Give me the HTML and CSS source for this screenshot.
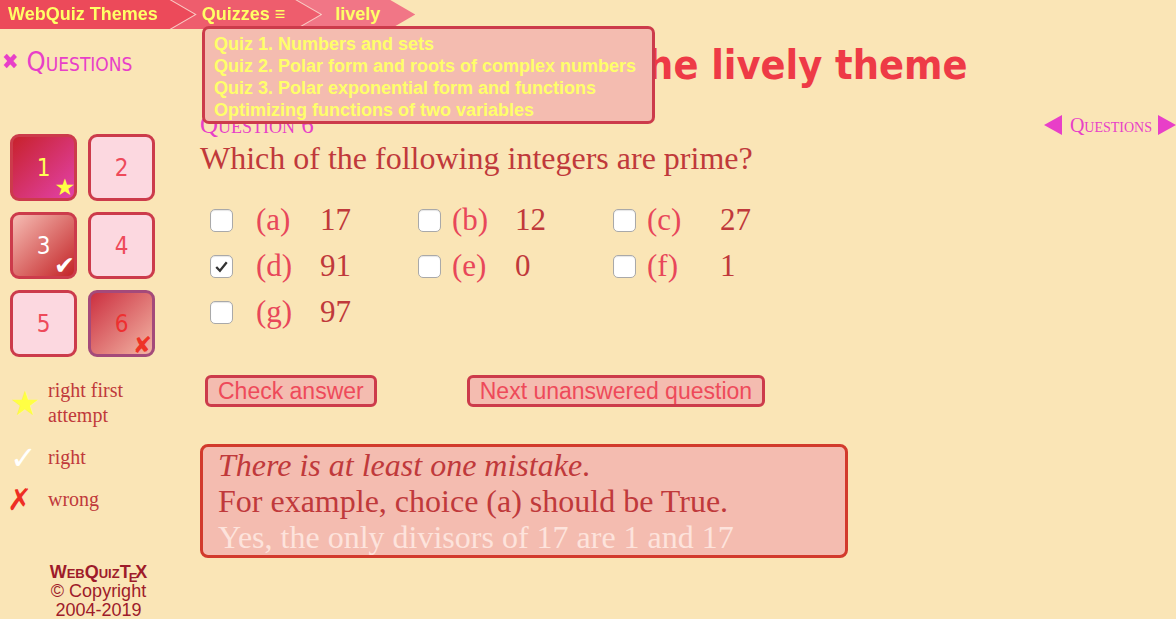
FILE: index.html
```html
<html>

<head>
  <link rel="stylesheet" href="styles.css">
</head>

<body>
  <div class="navbar">
    <div class="crumb first"><a class="c1">WebQuiz Themes</a></div>
    <div class="crumb second"><a class="c2">Quizzes &#8801;</a></div>
    <div class="crumb last"><a class="c3">lively</a></div>
  </div>

  <div class="dropdown">
    <div>Quiz 1. Numbers and sets</div>
    <div>Quiz 2. Polar form and roots of complex numbers</div>
    <div>Quiz 3. Polar exponential form and functions</div>
    <div>Optimizing functions of two variables</div>
  </div>

  <div class="page">
    <div class="sidebar">
      <div class="qhead"><span class="cross">&#10006;</span>Questions</div>

      <div class="qgrid">
        <div class="qbtn first-try">1<span class="mark star">&#9733;</span></div>
        <div class="qbtn">2</div>
        <div class="qbtn right">3<span class="mark tick">&#10004;</span></div>
        <div class="qbtn">4</div>
        <div class="qbtn">5</div>
        <div class="qbtn wrong current">6<span class="mark cross-mark">&#10008;</span></div>
      </div>

      <div class="legend">
        <div class="litem">
          <span class="licon star">&#9733;</span>
          <span class="ltext">right first attempt</span>
        </div>
        <div class="litem">
          <span class="licon tick">&#10003;</span>
          <span class="ltext">right</span>
        </div>
        <div class="litem">
          <span class="licon nope">&#10007;</span>
          <span class="ltext">wrong</span>
        </div>
      </div>

      <div class="credits">
        <div class="brand">WebQuiz<span class="tex">T<span class="e">e</span>X</span></div>
        <div>&copy; Copyright</div>
        <div>2004-2019</div>
      </div>
    </div>

    <div class="main">
      <h1 class="title">WebQuiz: the lively theme</h1>

      <div class="qrow">
        <span class="qnum">Question 6</span>
        <span class="qnav">
          <svg width="18" height="20" viewBox="0 0 18 20"><polygon points="18,0 18,20 0,10" fill="#e83fc8" /></svg>
          <span class="qnav-label">Questions</span>
          <svg width="18" height="20" viewBox="0 0 18 20"><polygon points="0,0 0,20 18,10" fill="#e83fc8" /></svg>
        </span>
      </div>

      <div class="question">Which of the following integers are prime?</div>

      <div class="choices">
        <span class="cb"></span><span class="lbl">(a)</span><span class="val">17</span>
        <span class="cb"></span><span class="lbl">(b)</span><span class="val">12</span>
        <span class="cb"></span><span class="lbl">(c)</span><span class="val">27</span>
        <span class="cb on"><svg width="21" height="21" viewBox="0 0 20 20"><path d="M5 10.5 L8.5 14 L15 6" fill="none" stroke="#333" stroke-width="2.2" /></svg></span><span class="lbl">(d)</span><span class="val">91</span>
        <span class="cb"></span><span class="lbl">(e)</span><span class="val">0</span>
        <span class="cb"></span><span class="lbl">(f)</span><span class="val">1</span>
        <span class="cb"></span><span class="lbl">(g)</span><span class="val">97</span>
      </div>

      <div class="actions">
        <button class="btn">Check answer</button>
        <button class="btn">Next unanswered question</button>
      </div>

      <div class="feedback">
        <div class="fb-bad">There is at least one mistake<span class="dot">.</span></div>
        <div>For example, choice (a) should be True.</div>
        <div class="fb-why">Yes, the only divisors of 17 are 1 and 17</div>
      </div>
    </div>
  </div>
</body>

</html>
```

FILE: styles.css
```css
body {
  margin: 0;
  padding: 0;
  overflow: hidden;
  background-color: #fae5b6;
  font-family: "Liberation Serif", serif;
  color: #c0393b;
}

/* breadcrumb bar */
.navbar {
  display: flex;
  height: 29px;
}

.crumb {
  position: relative;
  filter: drop-shadow(2px 0 0 #f9cbc4);
}

.crumb.first { z-index: 3; }
.crumb.second { z-index: 2; margin-left: -25px; }
.crumb.last { z-index: 1; margin-left: -25px; filter: none; }

.crumb a {
  display: block;
  height: 29px;
  line-height: 29px;
  font-family: "Liberation Sans", Arial, sans-serif;
  font-weight: bold;
  font-size: 18px;
  color: #ffff66;
  text-decoration: none;
  clip-path: polygon(0 0, calc(100% - 25px) 0, 100% 50%, calc(100% - 25px) 100%, 0 100%);
}

.c1 {
  background-color: #ec4a5a;
  padding: 0 37px 0 8px;
}

.c2 {
  background-color: #ee5d6d;
  padding: 0 35px 0 32px;
}

.c3 {
  background-color: #f17686;
  padding: 0 35px 0 40px;
}

.dropdown {
  position: absolute;
  left: 202px;
  top: 26px;
  width: 438px;
  padding: 4px 0 0 9px;
  height: 88px;
  border: 3px solid #cc3b4b;
  border-radius: 7px;
  background-color: #f4bcb0;
  font-family: "Liberation Sans", Arial, sans-serif;
  font-weight: bold;
  font-size: 18px;
  line-height: 22px;
  color: #ffff6a;
  z-index: 10;
}

.page {
  display: flex;
}

/* left column */
.sidebar {
  width: 197px;
  flex: none;
}

.qhead {
  margin: 17px 0 0 2px;
  font-family: "DejaVu Sans Condensed", "DejaVu Sans", sans-serif;
  font-size: 27px;
  font-variant: small-caps;
  color: #e83fc8;
  display: flex;
  align-items: center;
  height: 30px;
}

.qhead .cross {
  font-size: 22px;
  margin-right: 8px;
}

.qgrid {
  display: grid;
  grid-template-columns: 67px 67px;
  grid-auto-rows: 67px;
  gap: 11px;
  margin: 58px 0 0 10px;
}

.qbtn {
  position: relative;
  box-sizing: border-box;
  border: 3px solid #cc3b4b;
  border-radius: 9px;
  background-color: #fcd8e0;
  color: #ee4a5a;
  font-family: "DejaVu Sans Condensed", "DejaVu Sans", sans-serif;
  font-size: 24px;
  display: flex;
  align-items: center;
  justify-content: center;
}

.qbtn.first-try {
  background: linear-gradient(135deg, #c8222c, #e242aa);
  color: #ffff55;
}

.qbtn.right {
  background: linear-gradient(135deg, #f6bdb4, #c32427);
  color: #ffffff;
}

.qbtn.wrong {
  background: linear-gradient(135deg, #cc3040, #f2b4a4);
  border-color: #a44a7a;
  color: #ee3030;
}

.mark {
  position: absolute;
  line-height: 1;
  font-family: "DejaVu Sans", sans-serif;
}

.mark.star {
  right: -1px;
  bottom: -1px;
  font-size: 23px;
  color: #ffff44;
}

.mark.tick {
  right: -1px;
  bottom: -2px;
  font-size: 25px;
  color: #ffffff;
}

.mark.cross-mark {
  right: 0;
  bottom: -3px;
  font-size: 23px;
  color: #ee3326;
}

.legend {
  margin-top: 21px;
}

.litem {
  display: flex;
  align-items: center;
  margin-bottom: 17px;
}

.licon {
  display: flex;
  align-items: center;
  height: 25px;
  font-family: "DejaVu Sans", sans-serif;
  line-height: 1;
}

.licon.star {
  font-size: 34px;
  color: #ffff44;
  padding-left: 10px;
  width: 38px;
}

.licon.tick {
  font-size: 32px;
  color: #ffffff;
  padding-left: 10px;
  width: 38px;
}

.licon.nope {
  font-size: 30px;
  color: #ee2e24;
  padding-left: 7px;
  width: 41px;
}

.ltext {
  width: 100px;
  font-size: 20px;
  line-height: 25px;
  color: #c0393b;
}

.credits {
  margin-top: 51px;
  text-align: center;
  font-family: "Liberation Sans", Arial, sans-serif;
  font-size: 18px;
  line-height: 19px;
  color: #9e1b2a;
}

.brand {
  font-weight: bold;
  font-variant: small-caps;
}

.tex .e {
  position: relative;
  top: 4px;
  margin: 0 -2px;
  font-variant: small-caps;
}

/* right column */
.main {
  flex: 1;
  padding-left: 3px;
}

.title {
  margin: 14px 0 0;
  padding-left: 11px;
  text-align: center;
  font-family: "DejaVu Sans Condensed", "DejaVu Sans", sans-serif;
  font-weight: bold;
  font-size: 41px;
  line-height: 44px;
  color: #ee3a46;
}

.qrow {
  display: flex;
  justify-content: space-between;
  align-items: center;
  margin-top: 24px;
  height: 28px;
}

.qnum {
  font-size: 25px;
  font-variant: small-caps;
  color: #e83fc8;
}

.qnav {
  display: flex;
  align-items: center;
  font-size: 20px;
  font-variant: small-caps;
  color: #e83fc8;
}

.qnav-label {
  margin: 0 6px 0 8px;
}

.question {
  margin-top: 1px;
  font-size: 32px;
  line-height: 36px;
}

.choices {
  display: grid;
  grid-template-columns: 46px 64px 98px 34px 63px 98px 34px 73px auto;
  grid-auto-rows: 46px;
  align-items: center;
  margin: 21px 0 0 10px;
  font-size: 31px;
}

.cb {
  width: 21px;
  height: 21px;
  border: 1px solid #a9a9a9;
  border-radius: 5px;
  background-color: #ffffff;
  box-shadow: inset 0 1px 1px rgba(0, 0, 0, 0.1);
}

.cb svg {
  display: block;
}

.lbl {
  color: #e8475a;
}

.val {
  color: #c0393b;
}

.actions {
  display: flex;
  gap: 90px;
  margin: 40px 0 0 5px;
}

.btn {
  height: 32px;
  padding: 0 10px;
  font-family: "Liberation Sans", Arial, sans-serif;
  font-size: 23px;
  color: #ee4a5a;
  background-color: #f4bcb0;
  border: 3px solid #cc3b4b;
  border-radius: 6px;
}

.feedback {
  width: 648px;
  box-sizing: border-box;
  margin-top: 37px;
  padding: 0 15px;
  border: 3px solid #d23a2c;
  border-radius: 8px;
  background-color: #f4bcb0;
  font-size: 32px;
  line-height: 36px;
}

.fb-bad {
  font-style: italic;
}

.fb-bad .dot {
  font-style: normal;
}

.fb-why {
  color: #fde3dc;
}
```
